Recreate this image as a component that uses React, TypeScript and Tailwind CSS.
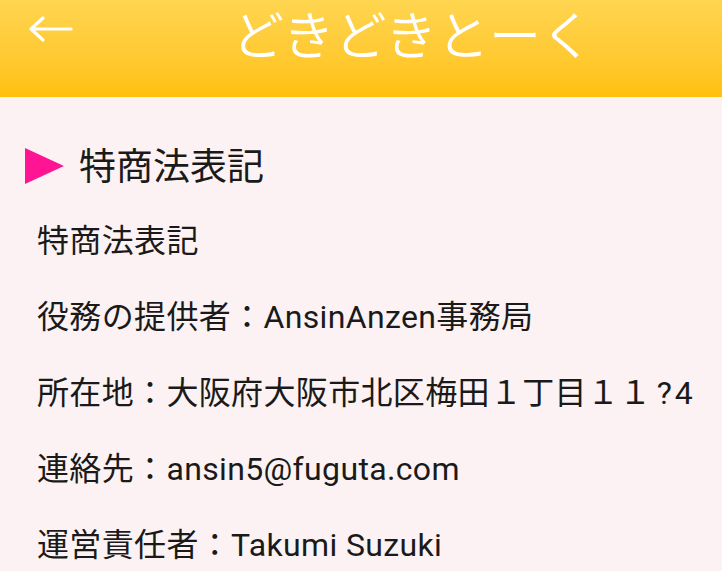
export default function App() {
  const rows: React.ReactNode[] = [
    '特商法表記',
    '役務の提供者：AnsinAnzen事務局',
    <>
      所在地：大阪府大阪市北区梅田１丁目１１<span className="ml-[5px] tracking-[3px]">?4</span>
    </>,
    '連絡先：ansin5@fuguta.com',
    '運営責任者：Takumi Suzuki',
  ];

  return (
    <div
      className="w-[722px] h-[571px] overflow-hidden bg-[#fcf2f3]"
      style={{ fontFamily: 'Roboto, "Noto Sans CJK JP", sans-serif' }}
    >
      {/* Header */}
      <div className="relative h-[97px] bg-gradient-to-b from-[#ffd54f] to-[#ffc107]">
        <svg className="absolute left-[28px] top-[15px] w-[46px] h-[28px]" viewBox="0 0 46 28" fill="none">
          <path d="M3 14H43M3 14L15 3M3 14L15 25" stroke="white" strokeWidth={3.2} strokeLinecap="round" strokeLinejoin="round" />
        </svg>
        <div className="pl-[232px] pt-[4px] text-[52px] leading-[68px] font-[350] text-white">
          どきどきとーく
        </div>
      </div>

      {/* Body */}
      <div className="pt-[49px]">
        <div className="flex items-center pl-[25px] h-[44px]">
          <svg className="w-[40px] h-[36px] -mt-[4px]" viewBox="0 0 40 36">
            <polygon points="0,0 39,18 0,36" fill="#ff1493" />
          </svg>
          <span className="ml-[14px] text-[37px] leading-[44px] text-[#1a1a1a]">特商法表記</span>
        </div>
        <div className="pl-[37px] pt-[35px] flex flex-col gap-[44px]">
          {rows.map((r, i) => (
            <div key={i} className="text-[32px] leading-[32px] tracking-[0.35px] text-[#1a1a1a] whitespace-nowrap">
              {r}
            </div>
          ))}
        </div>
      </div>
    </div>
  );
}
